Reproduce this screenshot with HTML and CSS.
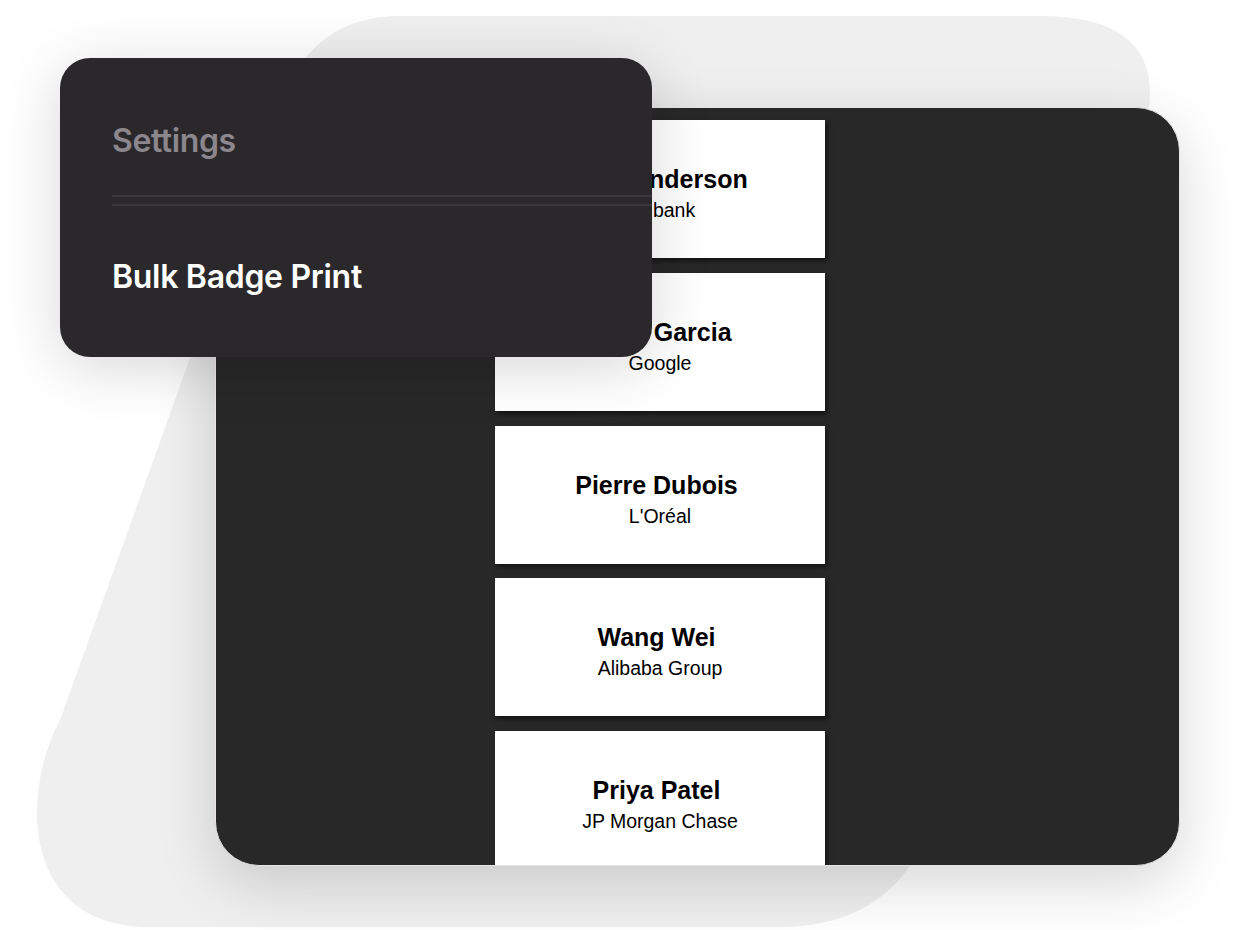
FILE: index.html
```html
<!DOCTYPE html>
<html lang="en">
<head>
<meta charset="utf-8">
<title>Bulk Badge Print</title>
<link rel="stylesheet" href="styles.css">
</head>
<body>
<div class="stage">
  <svg class="backdrop" width="1242" height="930" viewBox="0 0 1242 930" aria-hidden="true">
    <path d="M 400 16 L 1040 16 Q 1180 16 1141.8 140.3 L 935.3 812.3 Q 900 927 780 927 L 150 927 C 25 927 18 800 60 720 L 282.5 100.7 Q 313 16 400 16 Z" fill="#efefef"/>
  </svg>

  <section class="preview">
    <div class="badge-list">
      <div class="badge"><div class="badge-name">John Anderson</div><div class="badge-company">Citibank</div></div>
      <div class="badge"><div class="badge-name">Maria Garcia</div><div class="badge-company">Google</div></div>
      <div class="badge"><div class="badge-name">Pierre Dubois</div><div class="badge-company">L'Oréal</div></div>
      <div class="badge"><div class="badge-name">Wang Wei</div><div class="badge-company">Alibaba Group</div></div>
      <div class="badge"><div class="badge-name">Priya Patel</div><div class="badge-company">JP Morgan Chase</div></div>
    </div>
  </section>

  <aside class="settings-card">
    <div class="settings-label">Settings</div>
    <div class="settings-divider"></div>
    <div class="settings-title">Bulk Badge Print</div>
  </aside>
</div>
</body>
</html>
```

FILE: styles.css
```css
html, body {
  margin: 0;
  padding: 0;
  background: #ffffff;
}

body {
  width: 1242px;
  height: 930px;
  overflow: hidden;
  font-family: "Liberation Sans", Arial, sans-serif;
}

.stage {
  position: relative;
  width: 1242px;
  height: 930px;
  padding-top: 107px;
  box-sizing: border-box;
}

.backdrop {
  position: absolute;
  left: 0;
  top: 0;
  z-index: 0;
}

.preview {
  position: relative;
  z-index: 1;
  margin-left: 215px;
  width: 965px;
  height: 759px;
  box-sizing: border-box;
  background: #282828;
  border: 1px solid #e9e2e9;
  border-radius: 44px;
  overflow: hidden;
  box-shadow: 0 18px 60px rgba(0, 0, 0, 0.16);
  padding: 12px 0 0 279px;
}

.badge-list {
  display: flex;
  flex-direction: column;
  gap: 14.75px;
}

.badge {
  flex: none;
  width: 330px;
  height: 138px;
  box-sizing: border-box;
  background: #ffffff;
  box-shadow: 2px 3px 5px rgba(0, 0, 0, 0.55);
  padding-top: 45px;
  text-align: center;
  color: #000000;
}

.badge-name {
  font-size: 25px;
  line-height: 29px;
  font-weight: 700;
  padding-right: 7px;
}

.badge-company {
  margin-top: 5px;
  font-size: 19.5px;
  line-height: 22px;
  font-weight: 400;
}

.settings-card {
  position: absolute;
  z-index: 2;
  left: 60px;
  top: 58px;
  width: 592px;
  height: 299px;
  box-sizing: border-box;
  background: #2a282b;
  border-radius: 30px;
  box-shadow: 0 10px 60px rgba(0, 0, 0, 0.16);
  padding: 65px 0 0 52px;
  font-family: Inter, "Noto Sans", sans-serif;
}

.settings-label {
  font-size: 32px;
  line-height: 36px;
  font-weight: 600;
  color: #8b878d;
  letter-spacing: -0.4px;
}

.settings-divider {
  margin-top: 36px;
  height: 7px;
  border-top: 2px solid #39373b;
  border-bottom: 2px solid #39373b;
}

.settings-title {
  margin-top: 53px;
  font-size: 32px;
  line-height: 36px;
  font-weight: 600;
  color: #ffffff;
  letter-spacing: -0.3px;
}
```
